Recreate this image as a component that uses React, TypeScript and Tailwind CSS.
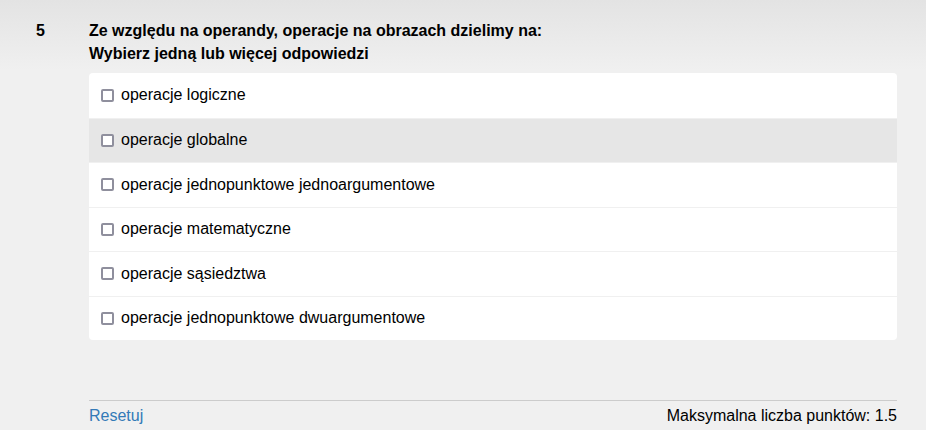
import { useState } from "react";

const options = [
    "operacje logiczne",
    "operacje globalne",
    "operacje jednopunktowe jednoargumentowe",
    "operacje matematyczne",
    "operacje sąsiedztwa",
    "operacje jednopunktowe dwuargumentowe",
];

const App = () => {
    const [checked, setChecked] = useState<boolean[]>(options.map(() => false));
    const hovered = 1;

    const toggle = (i: number) => {
        setChecked(prev => prev.map((c, idx) => (idx === i ? !c : c)));
    };

    return (
        <div
            className="w-[926px] h-[430px] flex bg-[linear-gradient(to_bottom,#e3e3e3,#f0f0f0_70px)] text-black overflow-hidden"
            style={{ fontFamily: '"Liberation Sans", Arial, sans-serif' }}
        >
            <div className="w-[89px] shrink-0 pl-[36px] pt-[19px] text-[16px] leading-[23px] font-bold">5</div>

            <div className="flex-1 pr-[29px] pt-[19px] flex flex-col">
                <div className="text-[16px] leading-[23px] font-bold">
                    <div>Ze względu na operandy, operacje na obrazach dzielimy na:</div>
                    <div>Wybierz jedną lub więcej odpowiedzi</div>
                </div>

                <div className="mt-[8px] bg-white rounded-[4px] overflow-hidden">
                    {options.map((opt, i) => (
                        <label
                            key={opt}
                            className={`flex items-center gap-[7px] pl-[12px] h-[44.5px] text-[16px] cursor-pointer ${
                                i > 0 ? "border-t border-[#f0f0f0]" : ""
                            } ${i === hovered ? "bg-[#e6e6e6]" : ""}`}
                            onClick={() => toggle(i)}
                        >
                            <span
                                className={`w-[13px] h-[13px] shrink-0 rounded-[2px] border-2 border-[#8f8f9d] ${
                                    checked[i] ? "bg-[#337ab7]" : "bg-white"
                                }`}
                            ></span>
                            <span>{opt}</span>
                        </label>
                    ))}
                </div>

                <div className="mt-auto mb-[4px] border-t border-[#cccccc] pt-[5px] flex justify-between text-[16px] leading-[20px]">
                    <span className="text-[#337ab7]">Resetuj</span>
                    <span>Maksymalna liczba punktów: 1.5</span>
                </div>
            </div>
        </div>
    );
};

export default App;
